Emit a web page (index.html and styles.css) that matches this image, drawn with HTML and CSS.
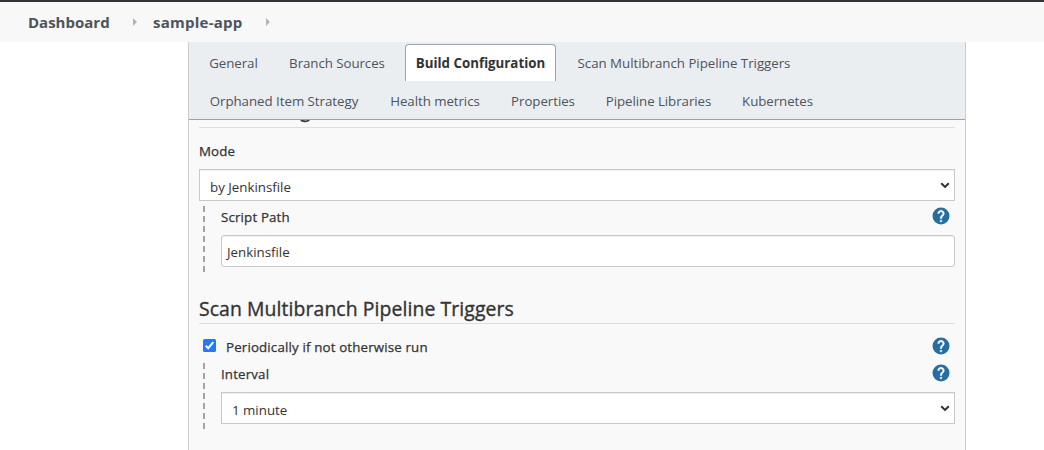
FILE: index.html
```html
<!DOCTYPE html>
<html lang="en">
<head>
<meta charset="utf-8">
<title>sample-app Config</title>
<link rel="stylesheet" href="styles.css">
</head>
<body>
<svg class="defs" width="0" height="0">
  <symbol id="help" viewBox="0 0 24 24"><circle cx="12" cy="12" r="10.200" fill="#266da0"/><path fill="#fff" stroke="#fff" stroke-width=".5" d="M13 19h-2v-2h2v2zm2.070-7.750l-.9.920C13.450 12.900 13 13.500 13 15h-2v-.5c0-1.100.45-2.100 1.170-2.830l1.240-1.260c.37-.36.59-.86.59-1.410 0-1.100-.9-2-2-2s-2 .9-2 2H8c0-2.210 1.790-4 4-4s4 1.790 4 4c0 .88-.36 1.680-.93 2.250z"/></symbol>
  <symbol id="chevron" viewBox="0 0 10 7"><path d="M1.200 1.300 5 4.900 8.800 1.300" fill="none" stroke="#303030" stroke-width="2"/></symbol>
</svg>
<header class="breadcrumbs">
  <a class="crumb dashboard"><span>Dashboard</span></a><i class="separator"></i>
  <a class="crumb project"><span>sample-app</span></a><i class="separator"></i>
</header>
<main class="panel">
  <nav class="tabs">
    <div class="tab-row">
      <a class="tab general"><span>General</span></a>
      <a class="tab sources"><span>Branch Sources</span></a>
      <a class="tab build active"><span>Build Configuration</span></a>
      <a class="tab triggers"><span>Scan Multibranch Pipeline Triggers</span></a>
    </div>
    <div class="tab-row">
      <a class="tab orphaned"><span>Orphaned Item Strategy</span></a>
      <a class="tab health"><span>Health metrics</span></a>
      <a class="tab properties"><span>Properties</span></a>
      <a class="tab libraries"><span>Pipeline Libraries</span></a>
      <a class="tab kubernetes"><span>Kubernetes</span></a>
    </div>
  </nav>
  <form class="form">
    <h2 class="section-title clipped"><span>Build Configuration</span></h2>
    <div class="label mode"><span>Mode</span></div>
    <div class="select"><span>by Jenkinsfile</span><svg class="chevron"><use href="#chevron"/></svg></div>
    <div class="nested script">
      <div class="field-head"><span class="label-text">Script Path</span><svg class="help"><use href="#help"/></svg></div>
      <div class="input"><span>Jenkinsfile</span></div>
    </div>
    <h2 class="section-title"><span>Scan Multibranch Pipeline Triggers</span></h2>
    <div class="check-row">
      <svg class="checkbox" viewBox="0 0 13 13"><rect width="13" height="13" rx="1.500" fill="#2478ff"/><path d="M2.700 6.800 5.200 9.200 10.300 3.200" fill="none" stroke="#fff" stroke-width="2"/></svg>
      <span class="label-text periodic">Periodically if not otherwise run</span>
      <svg class="help"><use href="#help"/></svg>
    </div>
    <div class="nested interval">
      <div class="field-head"><span class="label-text">Interval</span><svg class="help"><use href="#help"/></svg></div>
      <div class="select"><span>1 minute</span><svg class="chevron"><use href="#chevron"/></svg></div>
    </div>
  </form>
</main>
</body>
</html>
```
FILE: styles.css
```css
* { box-sizing: border-box; }
body { margin: 0; height: 450px; overflow: hidden; background: #fff; color: #333; font: 13.3px/20px "Open Sans", "Noto Sans", sans-serif; display: flex; flex-direction: column; }
span { white-space: nowrap; }
.defs { display: none; }
.breadcrumbs { height: 42px; flex: none; border-top: 2px solid #333238; background: #f8f8f8; display: flex; align-items: center; padding-left: 28px; color: #4d545d; font-size: 15px; font-weight: 700; }
.crumb { flex: none; }
.dashboard { width: 105px; }
.project { width: 113px; letter-spacing: .25px; }
.dashboard + .separator { margin-right: 16px; }
.separator { border-left: 4px solid #b5b5b5; border-top: 4px solid transparent; border-bottom: 4px solid transparent; }
.panel { width: 778px; height: 408px; margin-left: 188px; border: solid #ccc; border-width: 0 1px; background: #f9f9f9; display: flex; flex-direction: column; }
.tabs { height: 78px; flex: none; background: #eaeef1; border-bottom: 1px solid #98a3ad; padding: 2px 10px 0; }
.tab-row { display: flex; gap: 10px; height: 38px; }
.tab-row + .tab-row { gap: 11px; }
.tab { height: 37px; display: flex; align-items: center; justify-content: center; color: #4d545d; letter-spacing: -.06px; }
.general { width: 69px; margin-right: 1px; }
.sources { width: 116px; }
.build { width: 151px; }
.triggers { width: 236px; letter-spacing: -.03px; }
.orphaned { width: 170px; letter-spacing: -.03px; }
.health { width: 110px; }
.properties { width: 84px; }
.libraries { width: 125px; }
.kubernetes { width: 91px; }
.active { background: #fff; border: 1px solid #98a3ad; border-bottom: 0; border-radius: 4px 4px 0 0; color: #333; font-weight: 700; letter-spacing: 0; }
.form { flex: 1; overflow: hidden; padding: 0 10px; }
.section-title { margin: 22px 0 0; height: 30px; border-bottom: 1px solid #dedede; font-size: 19.4px; line-height: 29px; font-weight: 400; letter-spacing: .09px; -webkit-text-stroke: .35px currentColor; }
.clipped { margin-top: -22px; line-height: 23px; letter-spacing: .25px; }
.label, .label-text { letter-spacing: .16px; -webkit-text-stroke: .25px currentColor; }
.label { height: 41px; padding-top: 13px; }
.select, .input { height: 32px; border: 1px solid #c8c8c8; background: #fff; display: flex; align-items: center; justify-content: space-between; box-shadow: inset 0 1px 1px #0001; padding: 4px 4px 0 10px; }
.chevron { width: 10px; height: 7px; margin-top: -4px; }
.input { border-radius: 3px; padding: 2px 5px 0; }
.nested { margin-left: 4px; padding-left: 18px; background: repeating-linear-gradient(#a3a3a3 0 6px, transparent 6px 10px) 0 0 / 2px 100% no-repeat; }
.script { margin-top: 5px; height: 66px; }
.field-head { display: flex; justify-content: space-between; align-items: center; padding-right: 4px; }
.script .field-head { height: 20px; margin-bottom: 9px; }
.script .label-text { padding-top: 2px; }
.help { width: 20px; height: 20px; flex: none; }
.check-row { display: flex; align-items: center; height: 27px; margin-top: 9px; padding: 0 4px; }
.checkbox { width: 13px; height: 13px; margin: 0 10px 2px 0; }
.check-row .help { margin: 0 0 1px auto; }
.interval { margin-top: 3px; height: 67px; }
.interval .field-head { height: 20px; margin-bottom: 9px; }
.interval .label-text { padding-top: 2px; }
```
